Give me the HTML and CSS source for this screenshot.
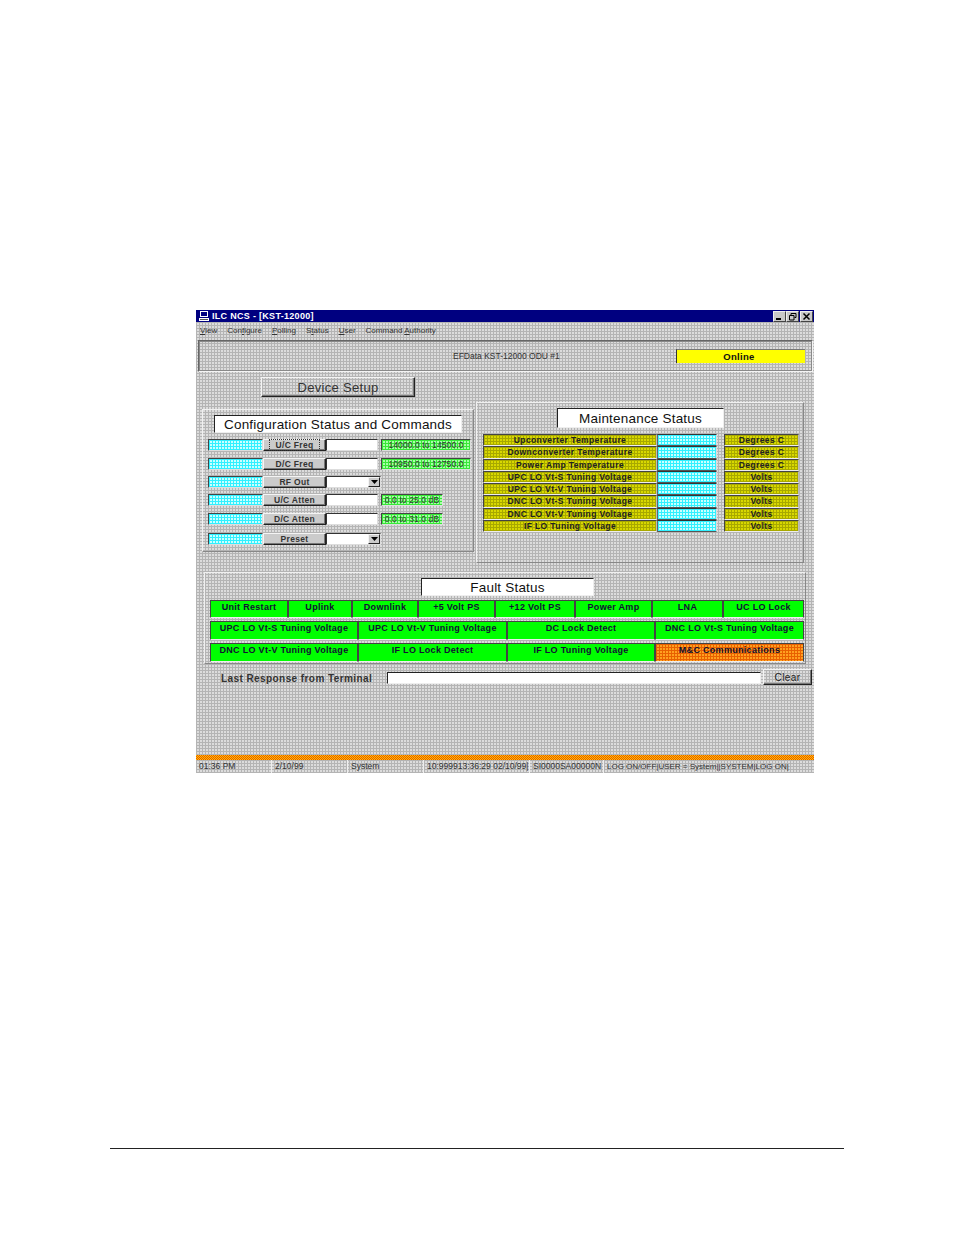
FILE: index.html
```html
<!DOCTYPE html>
<html lang="en">
<head>
<meta charset="utf-8">
<title>ILC NCS - [KST-12000]</title>
<link rel="stylesheet" href="styles.css">
</head>
<body>
<main class="window">
  <div class="titlebar">
    <svg class="appicon" viewBox="0 0 10 10" width="10" height="10"><rect x="1" y="0" width="8" height="6" fill="#fff"/><rect x="2" y="1" width="6" height="4" fill="#000080"/><rect x="0" y="7" width="10" height="3" fill="#fff"/><rect x="1" y="8" width="8" height="1" fill="#555"/></svg>
    <span class="title-text">ILC NCS - [KST-12000]</span>
    <span class="controls">
      <span class="ctl"><svg viewBox="0 0 11 9" width="11" height="9"><rect x="2" y="6" width="5" height="2" fill="#000"/></svg></span>
      <span class="ctl"><svg viewBox="0 0 11 9" width="11" height="9"><path d="M4 3.500V1.500h5v4H7.500M2.500 3.500h4.500v4.500h-4.500z" fill="none" stroke="#000" stroke-width="1"/></svg></span>
      <span class="ctl ctl-close"><svg viewBox="0 0 11 9" width="11" height="9"><path d="M2.500 1.500l6 6M8.500 1.500l-6 6" stroke="#000" stroke-width="1.500"/></svg></span>
    </span>
  </div>
  <nav class="menu">
    <span><u>V</u>iew</span><span>Con<u>f</u>igure</span><span><u>P</u>olling</span><span>S<u>t</u>atus</span><span><u>U</u>ser</span><span>Command <u>A</u>uthority</span>
  </nav>
  <section class="header-panel">
    <span class="device-name">EFData KST-12000 ODU #1</span>
    <span class="online">Online</span>
  </section>
  <button class="setup-btn">Device Setup</button>
  <div class="columns">
    <section class="config-panel">
      <h2 class="panel-title config-title">Configuration Status and Commands</h2>
      <div class="cfg-row"><span class="cyan"></span><button class="cmd focus"><span>U/C Freq</span></button><span class="field"></span><span class="range">14000.0 to 14500.0</span></div>
      <div class="cfg-row"><span class="cyan"></span><button class="cmd"><span>D/C Freq</span></button><span class="field"></span><span class="range">10950.0 to 12750.0</span></div>
      <div class="cfg-row"><span class="cyan"></span><button class="cmd"><span>RF Out</span></button><span class="field select"><span class="arrow"><svg viewBox="0 0 7 4" width="7" height="4"><path d="M0 0h7L3.500 4z" fill="#000"/></svg></span></span></div>
      <div class="cfg-row"><span class="cyan"></span><button class="cmd"><span>U/C Atten</span></button><span class="field"></span><span class="range short">0.0 to 25.0 dB</span></div>
      <div class="cfg-row"><span class="cyan"></span><button class="cmd"><span>D/C Atten</span></button><span class="field"></span><span class="range short">0.0 to 31.0 dB</span></div>
      <div class="cfg-row"><span class="cyan"></span><button class="cmd"><span>Preset</span></button><span class="field select"><span class="arrow"><svg viewBox="0 0 7 4" width="7" height="4"><path d="M0 0h7L3.500 4z" fill="#000"/></svg></span></span></div>
    </section>
    <section class="maint-panel">
      <h2 class="panel-title maint-title">Maintenance Status</h2>
      <div class="maint-grid">
        <span class="olive">Upconverter Temperature</span><span class="mcyan"></span><span class="olive">Degrees C</span>
        <span class="olive">Downconverter Temperature</span><span class="mcyan"></span><span class="olive">Degrees C</span>
        <span class="olive">Power Amp Temperature</span><span class="mcyan"></span><span class="olive">Degrees C</span>
        <span class="olive">UPC LO Vt-S Tuning Voltage</span><span class="mcyan"></span><span class="olive">Volts</span>
        <span class="olive">UPC LO Vt-V Tuning Voltage</span><span class="mcyan"></span><span class="olive">Volts</span>
        <span class="olive">DNC LO Vt-S Tuning Voltage</span><span class="mcyan"></span><span class="olive">Volts</span>
        <span class="olive">DNC LO Vt-V Tuning Voltage</span><span class="mcyan"></span><span class="olive">Volts</span>
        <span class="olive">IF LO Tuning Voltage</span><span class="mcyan"></span><span class="olive">Volts</span>
      </div>
    </section>
  </div>
  <section class="fault-panel">
    <h2 class="panel-title fault-title">Fault Status</h2>
    <div class="fault-row eight">
      <span class="ok">Unit Restart</span><span class="ok">Uplink</span><span class="ok">Downlink</span><span class="ok">+5 Volt PS</span><span class="ok">+12 Volt PS</span><span class="ok">Power Amp</span><span class="ok">LNA</span><span class="ok">UC LO Lock</span>
    </div>
    <div class="fault-row four">
      <span class="ok">UPC LO Vt-S Tuning Voltage</span><span class="ok">UPC LO Vt-V Tuning Voltage</span><span class="ok">DC Lock Detect</span><span class="ok">DNC LO Vt-S Tuning Voltage</span>
    </div>
    <div class="fault-row four">
      <span class="ok">DNC LO Vt-V Tuning Voltage</span><span class="ok">IF LO Lock Detect</span><span class="ok">IF LO Tuning Voltage</span><span class="ok alarm">M&amp;C Communications</span>
    </div>
  </section>
  <div class="response-row">
    <span class="response-label">Last Response from Terminal</span>
    <span class="response-field"></span>
    <button class="clear-btn">Clear</button>
  </div>
  <div class="stripe"></div>
  <footer class="statusbar">
    <span class="s1">01:36 PM</span><span class="s2">2/10/99</span><span class="s3">System</span><span class="s4">10:999913:36:29 02/10/99|</span><span class="s5">SI0000SA00000N</span><span class="s6">LOG ON/OFF|USER = System||SYSTEM|LOG ON|</span>
  </footer>
</main>
<hr class="page-rule">
</body>
</html>
```
FILE: styles.css
```css
* { box-sizing: border-box; }
html, body { margin: 0; padding: 0; background: #fff; }
body { width: 954px; height: 1235px; padding-top: 310px; overflow: hidden; font-family: "Liberation Sans", Arial, sans-serif; color: #111; }
button { font-family: inherit; padding: 0; margin: 0; color: inherit; }
h2 { margin: 0; font-weight: 400; }

.window {
  --mesh: 3px 3px;
  width: 618px; height: 463px; margin-left: 196px;
  display: flex; flex-direction: column; align-items: flex-start;
  background-color: #dcdcdc;
  background-image: linear-gradient(#b4b4b4 1px, transparent 1px), linear-gradient(90deg, #b4b4b4 1px, transparent 1px);
  background-size: var(--mesh);
}
.titlebar { width: 100%; height: 12px; flex: none; background: #000080; display: flex; align-items: center; padding: 0 1px 0 3px; color: #fff; }
.appicon { flex: none; }
.title-text { margin-left: 3px; font-size: 9px; font-weight: 700; letter-spacing: .3px; white-space: nowrap; }
.controls { margin-left: auto; display: flex; gap: 0; }
.ctl { width: 13px; height: 11px; display: flex; align-items: center; justify-content: center; background: #c8c8c8; border: 1px solid; border-color: #eee #444 #444 #eee; }
.ctl svg { display: block; flex: none; }
.ctl-close { margin-left: 1px; }

.menu { width: 100%; height: 14px; margin-top: 2px; flex: none; display: flex; gap: 10px; padding-left: 4px; font-size: 8px; line-height: 14px; color: #333; white-space: nowrap; }

.header-panel { width: 615px; height: 32px; margin: 2px 0 0 2px; flex: none; display: flex; align-items: center; border: 1px solid; border-color: #666 #f4f4f4 #f4f4f4 #666; outline: 1px solid #8a8a8a; outline-offset: -2px; }
.device-name { margin-left: 254px; width: 221px; font-size: 8.500px; color: #333; white-space: nowrap; }
.online { width: 129px; height: 14px; margin-left: 2px; padding-right: 4px; background: #ffff00; border-left: 1px solid #333; border-top: 1px solid #777; font-size: 9.500px; font-weight: 700; line-height: 13px; text-align: center; letter-spacing: .3px; }

.setup-btn { width: 154px; height: 20px; margin: 5px 0 0 65px; flex: none; background: transparent; border: 1px solid; border-color: #f4f4f4 #222 #222 #f4f4f4; box-shadow: inset -1px -1px 0 #777; font-size: 13px; letter-spacing: .3px; color: #333; }

.columns { display: flex; align-items: flex-start; flex: none; margin: 5px 0 0 6px; }
.config-panel { width: 272px; height: 143px; margin-top: 7px; flex: none; padding: 5px 0 0 5px; border: 1px solid; border-color: #f0f0f0 #888 #888 #f0f0f0; }
.maint-panel { width: 328px; height: 161px; margin-left: 2px; flex: none; padding: 5px 0 0 6px; border: 1px solid; border-color: #f0f0f0 #888 #888 #f0f0f0; }

.panel-title { background: #fff; color: #111; text-align: center; border: 1px solid; border-color: #222 #eee #eee #222; white-space: nowrap; font-size: 13.500px; }
.config-title { width: 248px; height: 18px; margin: 0 0 6px 6px; line-height: 17px; letter-spacing: .2px; }
.maint-title { width: 167px; height: 20px; margin: 0 0 6px 74px; line-height: 19px; letter-spacing: .2px; }

.cfg-row { height: 12px; margin-bottom: 6px; display: flex; align-items: stretch; }
.cfg-row:nth-child(2), .cfg-row:nth-child(5) { margin-bottom: 7px; }
.cfg-row:nth-child(6) { margin-bottom: 8px; }
.cyan { width: 55px; flex: none; background-color: #c8ffff; background-image: linear-gradient(#30f0ff 1px, transparent 1px), linear-gradient(90deg, #30f0ff 1px, transparent 1px); background-size: var(--mesh); border: 1px solid; border-color: #444 #ddd #ddd #444; }
.cmd { width: 63px; flex: none; background: #cbcbcb; border: 1px solid; border-color: #f4f4f4 #222 #222 #f4f4f4; box-shadow: inset -1px -1px 0 #777; font-size: 8.500px; font-weight: 700; line-height: 9px; letter-spacing: .3px; color: #333; white-space: nowrap; }
.cmd.focus span { outline: 1px dotted #333; padding: 0 6px; }
.field { width: 52px; flex: none; background: #fff; border: 1px solid; border-color: #333 #ddd #ddd #333; display: flex; justify-content: flex-end; }
.field.select { width: 55px; }
.arrow { width: 12px; background: #cbcbcb; border: 1px solid; border-color: #f4f4f4 #222 #222 #f4f4f4; display: flex; align-items: center; justify-content: center; }
.range { width: 90px; flex: none; margin-left: 3px; background-color: #a8ffa8; background-image: linear-gradient(#38e838 1px, transparent 1px), linear-gradient(90deg, #38e838 1px, transparent 1px); background-size: var(--mesh); border: 1px solid; border-color: #444 #ddd #ddd #444; font-size: 8.500px; line-height: 10px; text-align: center; color: #333; white-space: nowrap; letter-spacing: .1px; }
.range.short { width: 62px; }

.maint-grid { display: grid; grid-template-columns: 174px 60px 82px; grid-template-rows: 12px 13px 12px 12px 12px 13px 12px 12px; }
.olive { background-color: #d8d800; background-image: linear-gradient(#a8a800 1px, transparent 1px), linear-gradient(90deg, #a8a800 1px, transparent 1px); background-size: var(--mesh); border: 1px solid; border-color: #444 #bbb #eee #444; font-size: 8.500px; font-weight: 700; line-height: 10px; text-align: center; letter-spacing: .4px; color: #222; white-space: nowrap; }
.olive:nth-child(3n) { margin-left: 7px; }
.mcyan { background-color: #c8ffff; background-image: linear-gradient(#30f0ff 1px, transparent 1px), linear-gradient(90deg, #30f0ff 1px, transparent 1px); background-size: var(--mesh); border: 1px solid; border-color: #333 #ddd #555 #666; }

.fault-panel { width: 602px; height: 92px; margin: 9px 0 0 8px; flex: none; padding: 5px 0 0 5px; border: 1px solid; border-color: #f0f0f0 #888 #888 #f0f0f0; }
.fault-title { width: 173px; height: 18px; margin: 0 0 4px 211px; line-height: 17px; letter-spacing: .2px; }
.fault-row { display: grid; width: 594px; height: 19px; margin-bottom: 3px; }
.eight { grid-template-columns: 78px 64px 66px 77px 80px 77px 71px 81px; height: 18px; }
.four { grid-template-columns: 148px 149px 148px 149px; }
.ok { background: #00ff00; border: 1px solid; border-color: #444 #444 #eee #444; font-size: 9px; font-weight: 700; line-height: 13px; text-align: center; letter-spacing: .3px; color: #113; white-space: nowrap; }
.alarm { background-color: #ffa020; background-image: linear-gradient(#e86000 1px, transparent 1px), linear-gradient(90deg, #e86000 1px, transparent 1px); background-size: var(--mesh); }

.response-row { display: flex; align-items: flex-start; flex: none; margin: 8px 0 0 25px; height: 17px; }
.response-label { width: 166px; font-size: 10px; font-weight: 700; line-height: 14px; letter-spacing: .42px; color: #333; white-space: nowrap; }
.response-field { width: 374px; height: 12px; margin-top: 0; background: #fff; border: 1px solid; border-color: #222 #eee #eee #222; }
.clear-btn { width: 49px; height: 16px; margin-left: 2px; margin-top: -3px; background: transparent; border: 1px solid; border-color: #f4f4f4 #222 #222 #f4f4f4; box-shadow: inset -1px -1px 0 #777; font-size: 10px; font-weight: 400; letter-spacing: .4px; color: #222; }

.stripe { width: 100%; height: 5px; margin-top: auto; flex: none; background: repeating-conic-gradient(#e85000 0 25%, #ffc800 0 50%) 0 0 / 2px 2px; }
.statusbar { width: 100%; height: 13px; flex: none; display: flex; font-size: 8.500px; line-height: 13px; color: #333; white-space: nowrap; overflow: hidden; }
.statusbar span { flex: none; padding-left: 3px; border-right: 1px solid #eee; }
.s1 { width: 76px; }
.s2 { width: 76px; }
.s3 { width: 76px; }
.s4 { width: 106px; }
.s5 { width: 74px; }
.s6 { width: 191px; font-size: 8px; border-right: 0 !important; }

.page-rule { width: 734px; height: 1px; margin: 375px 0 0 110px; border: 0; background: #222; }
```
